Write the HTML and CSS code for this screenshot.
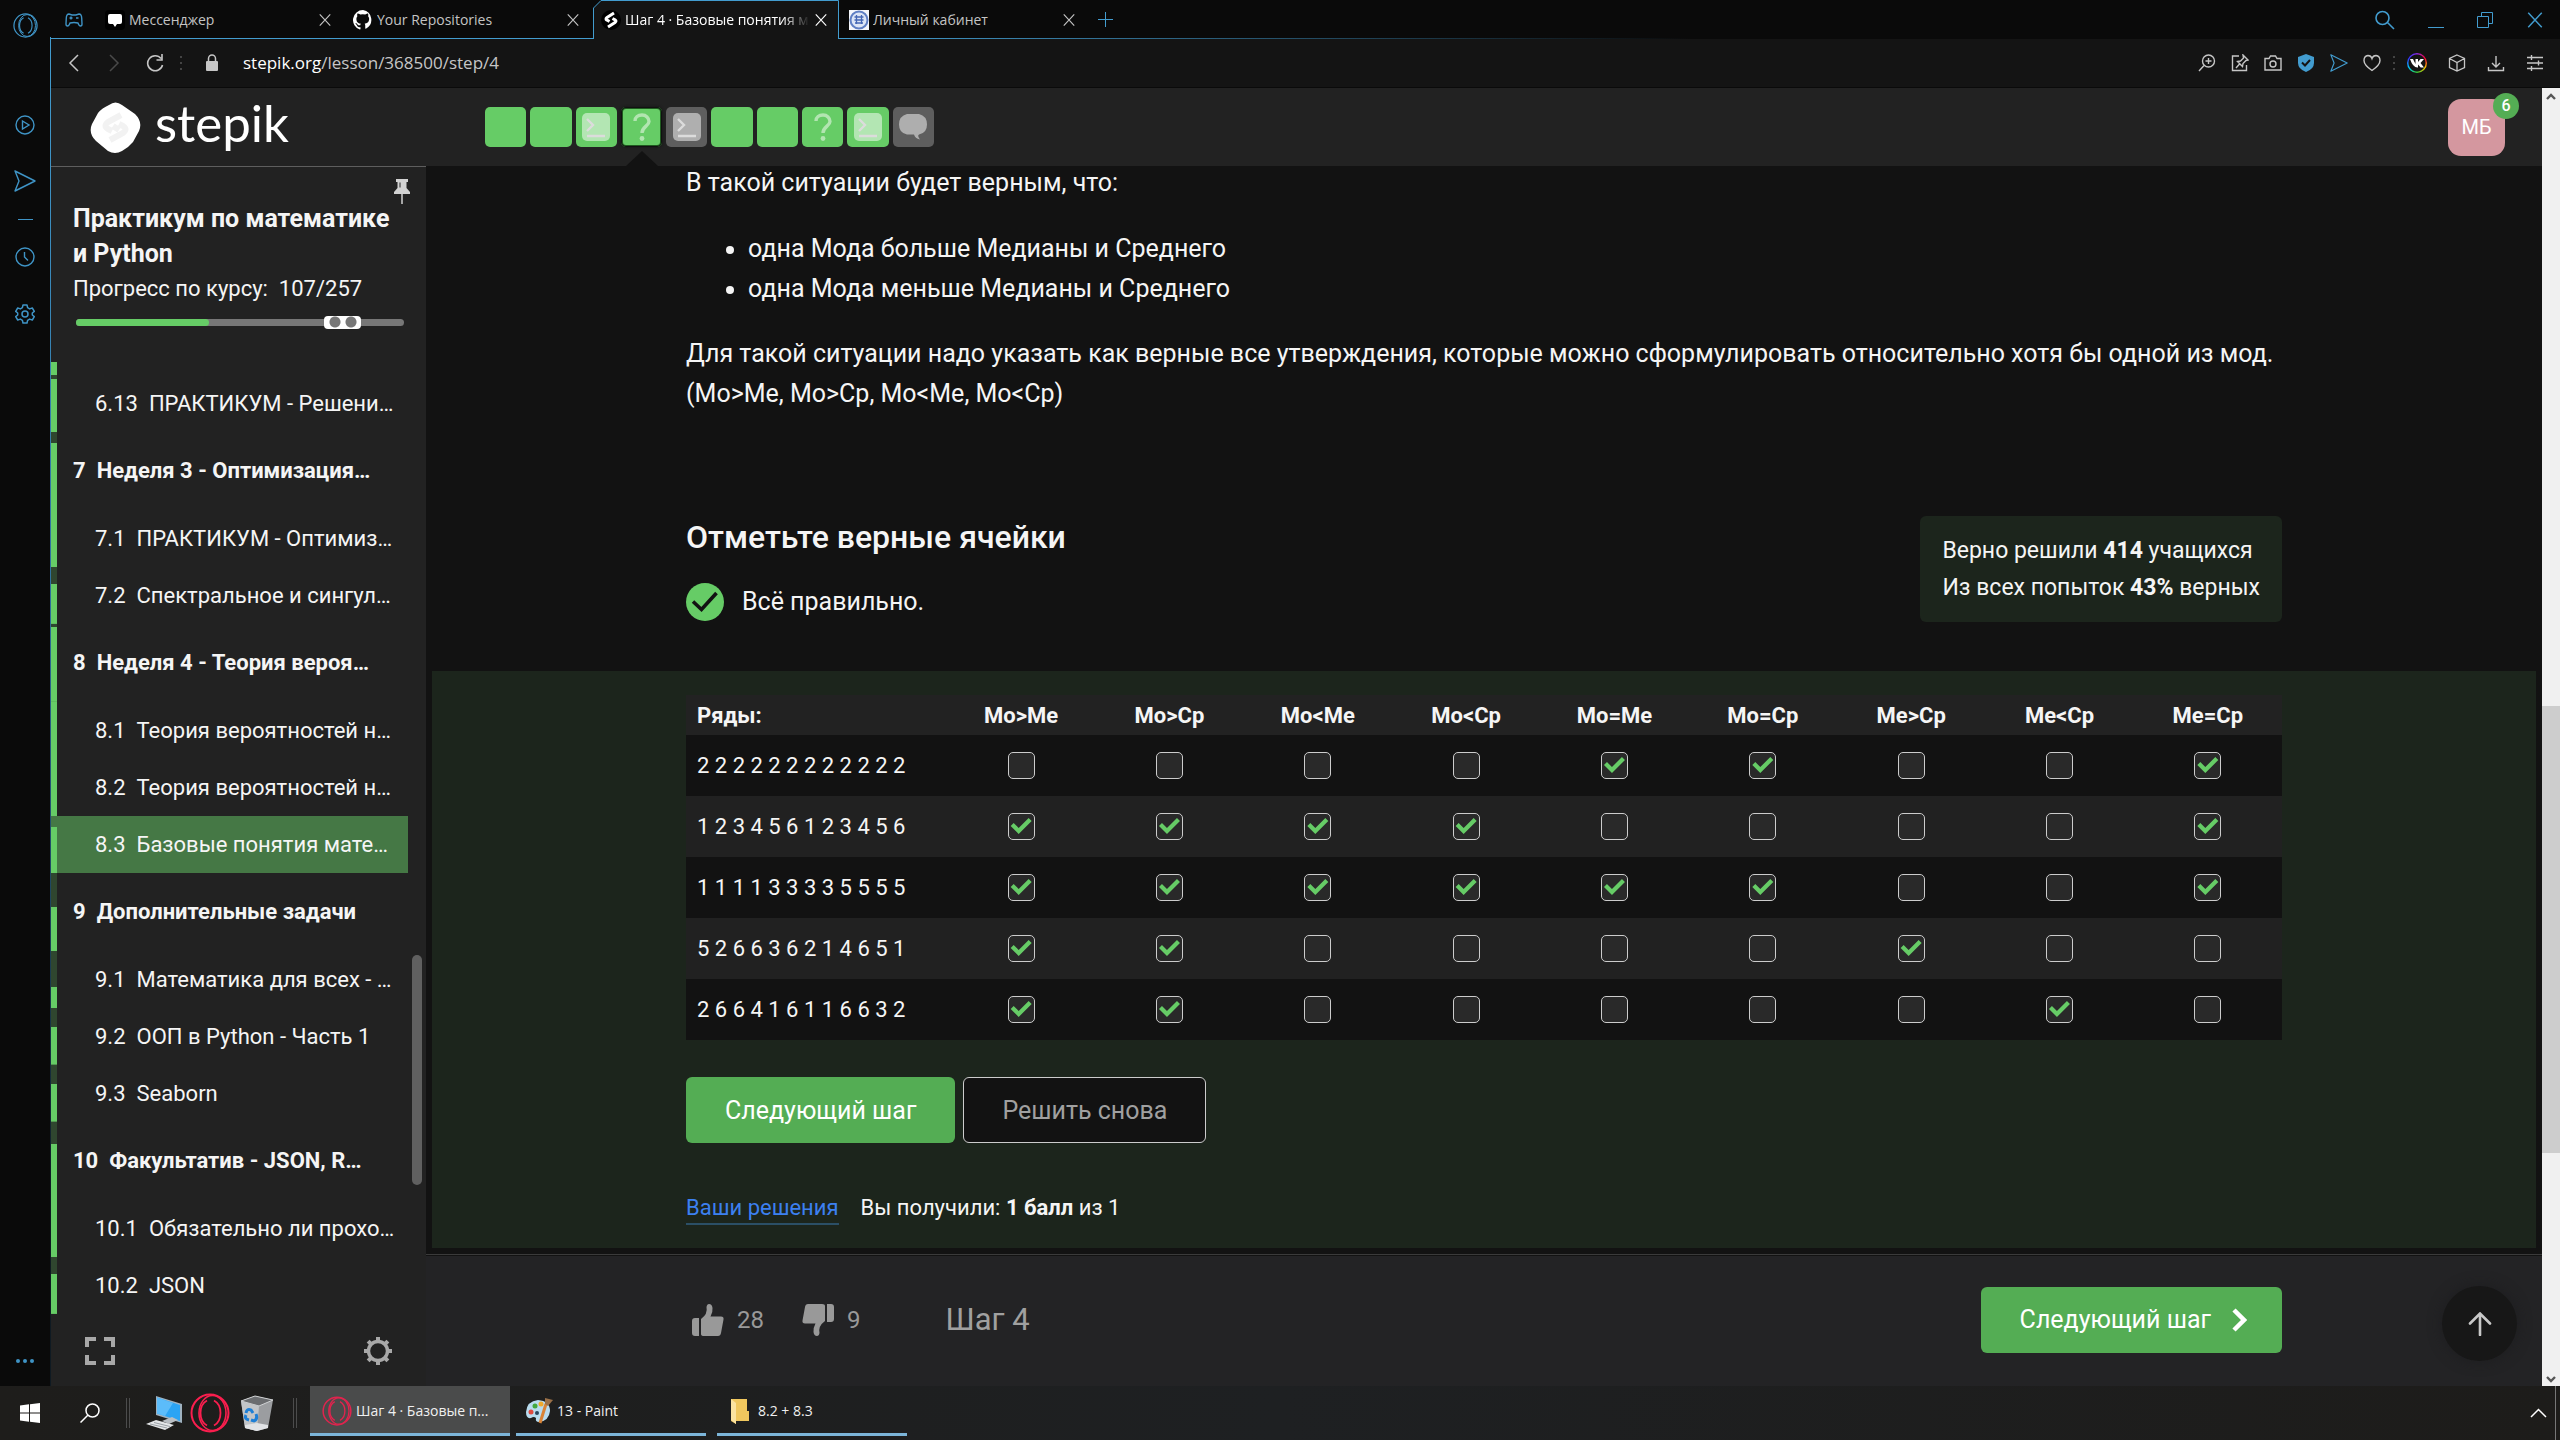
FILE: index.html
```html
<!DOCTYPE html>
<html lang="ru">
<head>
<meta charset="utf-8">
<meta name="viewport" content="width=device-width, initial-scale=1">
<title>Шаг 4 · Базовые понятия</title>
<link rel="stylesheet" href="styles.css">
</head>
<body>
<svg class="defs" aria-hidden="true">
  <symbol id="x" viewBox="0 0 16 16"><path d="M2 1.500 14 14.500M14 1.500 2 14.500" fill="none" stroke="currentColor" stroke-width="1.300"/></symbol>
  <symbol id="opera" viewBox="0 0 40 40"><g fill="none" stroke="currentColor"><circle cx="20" cy="20" r="18.500" stroke-width="2"/><ellipse cx="22.500" cy="20" rx="13.500" ry="17.500" stroke-width="1.600"/><path d="M17 7.500Q10.500 11 10.500 20T17 32.500M24 7.500Q30.500 11 30.500 20T24 32.500" stroke-width="1.800"/></g></symbol>
  <symbol id="send" viewBox="0 0 22 22"><path d="M1 1 21 11 1 21 5 11Z" fill="none" stroke="currentColor" stroke-width="1.400" stroke-linejoin="round"/></symbol>
  <symbol id="find" viewBox="0 0 20 20"><path d="M12.500 12.500 19 19M14 8A6.500 6.500 0 1 1 1 8 6.500 6.500 0 0 1 14 8Z" fill="none" stroke="currentColor" stroke-width="1.600"/></symbol>
  <symbol id="console" viewBox="0 0 28 28"><rect width="28" height="28" rx="5" fill="#fff" opacity=".5"/><path d="M5 6 11 12 5 18M5 23H23" fill="none" stroke="#dcdcdc" stroke-width="2.400"/></symbol>
  <symbol id="quiz" viewBox="0 0 18 28"><path d="M2 8C2 4 5 2 9 2s7 3 7 6.500C16 13 9 13.500 9 20" fill="none" stroke="#b2e5b1" stroke-width="3.400"/><circle cx="9" cy="25.500" r="2.400" fill="#b2e5b1"/></symbol>
  <symbol id="thumb" viewBox="0 0 32 32"><path d="M0 17q0-3 3-3h4v18H3q-3 0-3-3ZM9 15q7-5 5.500-12Q15 0 17 0q3 0 3.500 4 .5 4-2 8.500H29q3 0 2.500 3L29 29q-.5 3-3 3H12q-3 0-3-2Z" fill="currentColor"/></symbol>
</svg>

<div class="browser">
  <nav class="rail" aria-label="Боковая панель браузера">
    <button class="rail-logo" aria-label="Opera"><svg width="25" height="25"><use href="#opera"/></svg></button>
    <button class="rail-play" aria-label="Плеер"><svg width="20" height="20" viewBox="0 0 20 20" fill="none" stroke="currentColor" stroke-width="1.400"><circle cx="10" cy="10" r="9"/><path d="M7.500 6 14 10 7.500 14Z"/></svg></button>
    <button aria-label="Моя лента"><svg width="22" height="22"><use href="#send"/></svg></button>
    <span class="rail-line"></span>
    <button class="rail-clock" aria-label="История"><svg width="20" height="20" viewBox="0 0 20 20" fill="none" stroke="currentColor" stroke-width="1.400"><circle cx="10" cy="10" r="9"/><path d="M9.500 5V10L13 13.500"/></svg></button>
    <button aria-label="Настройки"><svg width="20" height="20" viewBox="0 0 20 20" fill="none" stroke="currentColor" stroke-width="1.500" stroke-linejoin="round"><circle cx="10" cy="10" r="3"/><path d="M8 1h4l.6 2.700 2 1.200L17.300 4l2 3.400L17.300 9v2l2 1.600-2 3.400-2.700-.9-2 1.200L12 19H8l-.6-2.700-2-1.200-2.700.9-2-3.400L2.700 11V9L.7 7.400l2-3.400 2.700.9 2-1.200Z"/></svg></button>
    <button class="rail-more" aria-label="Ещё"><svg width="18" height="4" viewBox="0 0 18 4" fill="currentColor"><circle cx="2" cy="2" r="2"/><circle cx="9" cy="2" r="2"/><circle cx="16" cy="2" r="2"/></svg></button>
  </nav>

  <div class="window">
    <div class="tabbar">
      <svg class="gamepad" width="18" height="14" viewBox="0 0 18 14" fill="none" stroke="currentColor" stroke-width="1.400"><path d="M4 1Q1.500 1 1.300 5L1 11q0 2 1.500 2Q4 13 5 10q4-1 8 0 1 3 2.500 3Q17 13 17 11l-.3-6Q16.500 1 14 1L11 2H7Z"/><path d="M4.500 5h3M6 3.500v3M11 5h2.500"/></svg>
      <div class="tab"><svg width="20" height="20" viewBox="0 0 20 20"><rect width="20" height="20" rx="4" fill="#000"/><path d="M5 4h10q2 0 2 2v6q0 2-2 2h-3l-2 3-2-3H5q-2 0-2-2V6q0-2 2-2Z" fill="#fff"/></svg><span>Мессенджер</span><button aria-label="Закрыть вкладку"><svg width="14" height="14"><use href="#x"/></svg></button></div>
      <div class="tab"><svg width="20" height="20" viewBox="0 0 16 16" fill="#fff"><path d="M8 0a8 8 0 0 0-2.500 15.600c.4 0 .5-.2.500-.4v-1.500c-2 .4-2.700-.9-2.900-1.500-.1-.3-.5-.9-.8-1.100-.3-.2-.7-.5 0-.5s1.100.600 1.200.8c.7 1.200 1.900.9 2.300.7.1-.5.300-.9.500-1.100-1.800-.2-3.600-.9-3.600-4 0-.9.300-1.600.8-2.100-.1-.2-.4-1 .1-2.100 0 0 .7-.2 2.200.8a7.400 7.400 0 0 1 4 0c1.500-1 2.200-.8 2.200-.8.4 1.100.2 1.900.1 2.100.5.600.8 1.300.8 2.100 0 3.100-1.900 3.700-3.600 3.900.3.300.5.700.5 1.500v2.200c0 .2.100.5.500.4A8 8 0 0 0 8 0Z"/></svg><span>Your Repositories</span><button aria-label="Закрыть вкладку"><svg width="14" height="14"><use href="#x"/></svg></button></div>
      <div class="tab tab-active"><svg class="tab-shape" viewBox="0 0 247 39" preserveAspectRatio="none"><path d="M.5 39V8L8 .500H245.500V39" fill="#141414" stroke="#429ccf"/></svg><svg width="20" height="20" viewBox="0 0 20 20"><circle cx="10" cy="10" r="10" fill="#000"/><path d="M13 3 6 7.500Q4 9 6 10.200M7 17l7-4.500q2-1.500 0-2.700L11.500 8.500M8.500 11.500 6 10" fill="none" stroke="#fff" stroke-width="3"/></svg><span>Шаг 4 · Базовые понятия м</span><button aria-label="Закрыть вкладку"><svg width="14" height="14"><use href="#x"/></svg></button></div>
      <div class="tab"><svg width="20" height="20" viewBox="0 0 20 20"><rect width="20" height="20" fill="#f4f6fb"/><circle cx="10" cy="10" r="8.500" fill="#dce5f6" stroke="#5f7fc4" stroke-width="2"/><path d="M5.500 7h9M5.500 10h9M6 13h8M7.500 5v9M12.500 5v9" stroke="#4567b5" stroke-width="1.300"/></svg><span>Личный кабинет</span><button aria-label="Закрыть вкладку"><svg width="14" height="14"><use href="#x"/></svg></button></div>
      <button class="new-tab" aria-label="Новая вкладка"><svg width="15" height="15" viewBox="0 0 15 15" stroke="currentColor"><path d="M0 7.500H15M7.500 0V15"/></svg></button>
      <div class="win-controls">
        <button aria-label="Поиск"><svg width="20" height="20"><use href="#find"/></svg></button>
        <button aria-label="Свернуть"><svg width="16" height="16" viewBox="0 0 16 16" stroke="currentColor"><path d="M0 15.500H16"/></svg></button>
        <button aria-label="Развернуть"><svg width="16" height="16" viewBox="0 0 16 16" fill="none" stroke="currentColor"><path d="M.5 4.500h11v11H.5ZM4.500 4.500v-4h11v11h-4"/></svg></button>
        <button aria-label="Закрыть"><svg width="18" height="18"><use href="#x"/></svg></button>
      </div>
    </div>

    <div class="addressbar">
      <button aria-label="Назад"><svg width="16" height="18" viewBox="0 0 16 18" fill="none" stroke="currentColor" stroke-width="1.500"><path d="M12 1 4 9 12 17"/></svg></button>
      <button class="dim" aria-label="Вперёд"><svg width="16" height="18" viewBox="0 0 16 18" fill="none" stroke="currentColor" stroke-width="1.500"><path d="M4 1 12 9 4 17"/></svg></button>
      <button class="reload" aria-label="Обновить"><svg width="18" height="18" viewBox="0 0 18 18" fill="none" stroke="currentColor" stroke-width="1.600"><path d="M15 4.500A7.500 7.500 0 1 0 16.500 11M16 0V6H10.500"/></svg></button>
      <span class="dots"></span>
      <svg class="lock" width="14" height="18" viewBox="0 0 14 18"><rect x="1" y="7" width="12" height="10" rx="1" fill="#c6c6c6"/><path d="M3.500 8V4.500a3.500 3.500 0 0 1 7 0V8" fill="none" stroke="#c6c6c6" stroke-width="1.500"/></svg>
      <p class="url"><b>stepik.org</b>/lesson/368500/step/4</p>
      <div class="tools">
        <button aria-label="Масштаб"><svg width="18" height="18" viewBox="0 0 18 18" fill="none" stroke="currentColor" stroke-width="1.400"><circle cx="10.500" cy="7" r="6"/><path d="M6 11.500 1 17M7.500 7h6M10.500 4v6"/></svg></button>
        <button aria-label="Закрепить"><svg width="18" height="18" viewBox="0 0 18 18" fill="none" stroke="currentColor" stroke-width="1.400"><path d="M8 2H1.500v14.500h14V11M12 1l5 5-2 .5-3 3-.5 3-5-5 3-.5 3-3ZM9 9.500 5 14"/></svg></button>
        <button aria-label="Снимок"><svg width="18" height="18" viewBox="0 0 18 18" fill="none" stroke="currentColor" stroke-width="1.400"><path d="M1 4.500h4l1.500-2.500h5L13 4.500h4V16H1Z"/><circle cx="9" cy="10" r="3"/></svg></button>
        <button class="accent" aria-label="Блокировка"><svg width="18" height="18" viewBox="0 0 18 18"><path d="M9 0 17 3V9q0 6-8 9-8-3-8-9V3Z" fill="currentColor"/><path d="M5 8.500 8 11.500 13 6" fill="none" stroke="#141414" stroke-width="2"/></svg></button>
        <button class="accent" aria-label="Отправить"><svg width="18" height="18"><use href="#send"/></svg></button>
        <button aria-label="Закладки"><svg width="18" height="18" viewBox="0 0 18 18" fill="none" stroke="currentColor" stroke-width="1.400"><path d="M9 16.500Q1 11 1 6.500 1 2 5 1.500 8 1.500 9 4.500 10 1.500 13 1.500 17 2 17 6.500 17 11 9 16.500Z"/></svg></button>
        <span class="dots"></span>
        <button class="vk" aria-label="VK"><svg width="16" height="12" viewBox="0 0 16 12"><path d="M1 2h3l2.500 5V2H9v3l2.500-3H15l-3.500 4 3.500 4.500h-3.300L9 7.500v3Q4 11 1 2Z" fill="#fff"/></svg></button>
        <button class="gap-l" aria-label="Расширения"><svg width="18" height="18" viewBox="0 0 18 18" fill="none" stroke="currentColor" stroke-width="1.300"><path d="M9 1 16.500 4.500v9L9 17 1.500 13.500v-9ZM1.500 4.500 9 8.500l7.500-4M9 8.500V17"/></svg></button>
        <button class="gap-l" aria-label="Загрузки"><svg width="18" height="18" viewBox="0 0 18 18" fill="none" stroke="currentColor" stroke-width="1.400"><path d="M9 2v11M5 9l4 4 4-4M1.500 13v3.500h15V13"/></svg></button>
        <button class="gap-l" aria-label="Простая настройка"><svg width="18" height="18" viewBox="0 0 18 18" fill="none" stroke="currentColor" stroke-width="1.400"><path d="M1 3.500h16M1 9h16M1 14.500h16M5.500 1v5M12.500 6.500v5M5.500 12v5"/></svg></button>
      </div>
    </div>

    <div class="viewport">
      <div class="page">
        <header class="topbar">
          <a class="logo" href="#"><svg width="51" height="51" viewBox="0 0 51 51"><path d="M19 3Q25.500-2 32 3L45 12Q53 20 49 29L43 40Q38 46 32 49 25 53 18 49L6 39Q-2 31 2 22L8 11Q12 6 19 3Z" fill="#fff"/><path d="M31 13 18 20q-5 4 0 7l4 2M20 38l13-7q5-4 0-7l-4-2M23 24l6 4" fill="none" stroke="#f2f2f2" stroke-width="6"/></svg><span>stepik</span></a>
          <nav class="steps" aria-label="Шаги урока">
            <a href="#" aria-label="Шаг 1"></a>
            <a href="#" aria-label="Шаг 2"></a>
            <a href="#" aria-label="Шаг 3"><svg width="28" height="28"><use href="#console"/></svg></a>
            <a href="#" class="current" aria-label="Шаг 4"><svg width="18" height="28"><use href="#quiz"/></svg></a>
            <a href="#" class="todo" aria-label="Шаг 5"><svg width="28" height="28"><use href="#console"/></svg></a>
            <a href="#" aria-label="Шаг 6"></a>
            <a href="#" aria-label="Шаг 7"></a>
            <a href="#" aria-label="Шаг 8"><svg width="18" height="28"><use href="#quiz"/></svg></a>
            <a href="#" aria-label="Шаг 9"><svg width="28" height="28"><use href="#console"/></svg></a>
            <a href="#" class="todo" aria-label="Шаг 10"><svg width="30" height="26" viewBox="0 0 30 26"><path d="M9 0H21Q29 2 29 10.500T21 20.500q-2 1 1 5-5-1-6-5H9Q1 19 1 10.500T9 0Z" fill="#aeaeae"/></svg></a>
          </nav>
          <button class="avatar">МБ<span>6</span></button>
        </header>

        <div class="columns">
          <aside class="sidebar">
            <div class="course">
              <button class="pin" aria-label="Закрепить меню"><svg width="16" height="25" viewBox="0 0 16 25"><path d="M2 0H14V3H12.500V9L16 13V15H0V13L3.500 9V3H2Z" fill="#d2d2d2"/><path d="M6 3.500v5" stroke="#222"/><path d="M8 15V25" stroke="#d2d2d2" stroke-width="1.500"/></svg></button>
              <h1>Практикум по математике и Python</h1>
              <p>Прогресс по курсу:&nbsp; 107/257</p>
              <div class="progress"><i></i><span></span></div>
            </div>
            <nav class="toc" aria-label="Содержание курса">
              <div class="toc-cut"></div>
              <a href="#" style="--done:93%"><b>6.13</b>ПРАКТИКУМ - Решени…</a>
              <h2 style="--done:86%"><b>7</b>Неделя 3 - Оптимизация…</h2>
              <a href="#"><b>7.1</b>ПРАКТИКУМ - Оптимиз…</a>
              <a href="#" style="--done:70%"><b>7.2</b>Спектральное и сингул…</a>
              <h2 style="--done:96%"><b>8</b>Неделя 4 - Теория вероя…</h2>
              <a href="#"><b>8.1</b>Теория вероятностей н…</a>
              <a href="#"><b>8.2</b>Теория вероятностей н…</a>
              <a href="#" class="active" style="--done:81%"><b>8.3</b>Базовые понятия мате…</a>
              <h2 style="--done:57%"><b>9</b>Дополнительные задачи</h2>
              <a href="#" style="--done:37%"><b>9.1</b>Математика для всех - …</a>
              <a href="#" style="--done:66%"><b>9.2</b>ООП в Python - Часть 1</a>
              <a href="#" style="--done:66%"><b>9.3</b>Seaborn</a>
              <h2 style="--done:72%"><b>10</b>Факультатив - JSON, R…</h2>
              <a href="#"><b>10.1</b>Обязательно ли прохо…</a>
              <a href="#" style="--done:70%"><b>10.2</b>JSON</a>
              <span class="toc-thumb"></span>
            </nav>
            <div class="side-foot">
              <button aria-label="На весь экран"><svg width="30" height="28" viewBox="0 0 30 28" fill="none" stroke="currentColor" stroke-width="4"><path d="M2 10V2h9M19 2h9v8M28 18v8h-9M11 26H2v-8"/></svg></button>
              <button aria-label="Настройки"><svg width="28" height="28" viewBox="0 0 28 28" fill="none" stroke="currentColor"><circle cx="14" cy="14" r="9.500" stroke-width="3.400"/><path d="M14 0v4M14 24v4M0 14h4M24 14h4M4.100 4.100 7 7M21 21l2.900 2.900M4.100 23.900 7 21M21 7l2.900-2.900" stroke-width="4"/></svg></button>
            </div>
          </aside>

          <main class="main">
            <div class="content lesson">
              <p>В такой ситуации будет верным, что:</p>
              <ul><li>одна Мода больше Медианы и Среднего</li><li>одна Мода меньше Медианы и Среднего</li></ul>
              <p>Для такой ситуации надо указать как верные все утверждения, которые можно сформулировать относительно хотя бы одной из мод.<br>(Mo&gt;Me, Mo&gt;Ср, Mo&lt;Me, Mo&lt;Ср)</p>
            </div>
            <div class="content task-head">
              <div>
                <h2>Отметьте верные ячейки</h2>
                <p class="verdict"><svg width="38" height="38" viewBox="0 0 38 38"><circle cx="19" cy="19" r="19" fill="#66cc66"/><path d="M7 18.500 15.500 26.500 30.500 10" fill="none" stroke="#121212" stroke-width="3.600"/></svg>Всё правильно.</p>
              </div>
              <div class="stats"><p>Верно решили <b>414</b> учащихся</p><p>Из всех попыток <b>43%</b> верных</p></div>
            </div>

            <section class="attempt">
              <div class="content">
                <table>
                  <thead><tr><th scope="col">Ряды:</th><th scope="col" id="c1">Mo&gt;Me</th><th scope="col" id="c2">Mo&gt;Ср</th><th scope="col" id="c3">Mo&lt;Me</th><th scope="col" id="c4">Mo&lt;Ср</th><th scope="col" id="c5">Mo=Me</th><th scope="col" id="c6">Mo=Ср</th><th scope="col" id="c7">Me&gt;Ср</th><th scope="col" id="c8">Me&lt;Ср</th><th scope="col" id="c9">Me=Ср</th></tr></thead>
                  <tbody>
                    <tr><td id="r1">2 2 2 2 2 2 2 2 2 2 2 2</td>
                      <td><input type="checkbox" aria-labelledby="r1 c1"></td><td><input type="checkbox" aria-labelledby="r1 c2"></td><td><input type="checkbox" aria-labelledby="r1 c3"></td><td><input type="checkbox" aria-labelledby="r1 c4"></td><td><input type="checkbox" aria-labelledby="r1 c5" checked></td><td><input type="checkbox" aria-labelledby="r1 c6" checked></td><td><input type="checkbox" aria-labelledby="r1 c7"></td><td><input type="checkbox" aria-labelledby="r1 c8"></td><td><input type="checkbox" aria-labelledby="r1 c9" checked></td></tr>
                    <tr><td id="r2">1 2 3 4 5 6 1 2 3 4 5 6</td>
                      <td><input type="checkbox" aria-labelledby="r2 c1" checked></td><td><input type="checkbox" aria-labelledby="r2 c2" checked></td><td><input type="checkbox" aria-labelledby="r2 c3" checked></td><td><input type="checkbox" aria-labelledby="r2 c4" checked></td><td><input type="checkbox" aria-labelledby="r2 c5"></td><td><input type="checkbox" aria-labelledby="r2 c6"></td><td><input type="checkbox" aria-labelledby="r2 c7"></td><td><input type="checkbox" aria-labelledby="r2 c8"></td><td><input type="checkbox" aria-labelledby="r2 c9" checked></td></tr>
                    <tr><td id="r3">1 1 1 1 3 3 3 3 5 5 5 5</td>
                      <td><input type="checkbox" aria-labelledby="r3 c1" checked></td><td><input type="checkbox" aria-labelledby="r3 c2" checked></td><td><input type="checkbox" aria-labelledby="r3 c3" checked></td><td><input type="checkbox" aria-labelledby="r3 c4" checked></td><td><input type="checkbox" aria-labelledby="r3 c5" checked></td><td><input type="checkbox" aria-labelledby="r3 c6" checked></td><td><input type="checkbox" aria-labelledby="r3 c7"></td><td><input type="checkbox" aria-labelledby="r3 c8"></td><td><input type="checkbox" aria-labelledby="r3 c9" checked></td></tr>
                    <tr><td id="r4">5 2 6 6 3 6 2 1 4 6 5 1</td>
                      <td><input type="checkbox" aria-labelledby="r4 c1" checked></td><td><input type="checkbox" aria-labelledby="r4 c2" checked></td><td><input type="checkbox" aria-labelledby="r4 c3"></td><td><input type="checkbox" aria-labelledby="r4 c4"></td><td><input type="checkbox" aria-labelledby="r4 c5"></td><td><input type="checkbox" aria-labelledby="r4 c6"></td><td><input type="checkbox" aria-labelledby="r4 c7" checked></td><td><input type="checkbox" aria-labelledby="r4 c8"></td><td><input type="checkbox" aria-labelledby="r4 c9"></td></tr>
                    <tr><td id="r5">2 6 6 4 1 6 1 1 6 6 3 2</td>
                      <td><input type="checkbox" aria-labelledby="r5 c1" checked></td><td><input type="checkbox" aria-labelledby="r5 c2" checked></td><td><input type="checkbox" aria-labelledby="r5 c3"></td><td><input type="checkbox" aria-labelledby="r5 c4"></td><td><input type="checkbox" aria-labelledby="r5 c5"></td><td><input type="checkbox" aria-labelledby="r5 c6"></td><td><input type="checkbox" aria-labelledby="r5 c7"></td><td><input type="checkbox" aria-labelledby="r5 c8" checked></td><td><input type="checkbox" aria-labelledby="r5 c9"></td></tr>
                  </tbody>
                </table>
                <div class="actions"><button class="btn">Следующий шаг</button><button class="btn btn-ghost">Решить снова</button></div>
                <p class="score"><a href="#">Ваши решения</a><span>Вы получили: <b>1 балл</b> из 1</span></p>
              </div>
            </section>

            <footer class="step-foot">
              <div class="content">
                <button class="vote"><svg width="32" height="32"><use href="#thumb"/></svg>28</button>
                <button class="vote vote-down"><svg width="32" height="32"><use href="#thumb"/></svg>9</button>
                <span class="step-name">Шаг 4</span>
                <button class="btn btn-next">Следующий шаг<svg width="15" height="24" viewBox="0 0 15 24"><path d="M2 2 12 12 2 22" fill="none" stroke="#fff" stroke-width="4.500"/></svg></button>
              </div>
              <button class="to-top" aria-label="Наверх"><svg width="24" height="24" viewBox="0 0 24 24" fill="none" stroke="#c8c8c8" stroke-width="2.600" stroke-linecap="round"><path d="M12 23V2M2 11.500 12 1.500 22 11.500"/></svg></button>
            </footer>
          </main>
        </div>
      </div>

      <div class="scrollbar" aria-hidden="true">
        <svg width="10" height="8" viewBox="0 0 10 8"><path d="M1 6 5 2 9 6" fill="none" stroke="#555" stroke-width="2.400"/></svg>
        <span></span>
        <svg width="10" height="8" viewBox="0 0 10 8"><path d="M1 2 5 6 9 2" fill="none" stroke="#555" stroke-width="2.400"/></svg>
      </div>
    </div>
  </div>
</div>

<footer class="taskbar">
  <button class="start" aria-label="Пуск"><svg width="20" height="20" viewBox="0 0 20 20" fill="#fff"><path d="M0 2.500 9 1.300V9.500H0ZM10 1.200 20 0V9.500H10ZM0 10.500H9V18.700L0 17.500ZM10 10.500H20V20L10 18.800Z"/></svg></button>
  <button class="search" aria-label="Поиск"><svg width="20" height="20" viewBox="0 0 20 20" fill="none" stroke="#fff" stroke-width="1.500"><circle cx="12.500" cy="7.500" r="6.500"/><path d="M8 12 .500 19.500"/></svg></button>
  <span class="grip"></span>
  <button class="pc" aria-label="Компьютер"><svg width="38" height="36" viewBox="0 0 38 36"><path d="M11 1 37 9V28L11 20Z" fill="#9fb2c0"/><path d="M12 2.500 35 10V26L12 18.500Z" fill="#2ba4f4"/><path d="M12 2.500 28 8 20 21 12 18.500Z" fill="#5cbcfa"/><path d="M17 26 27 22 33 25 24 29Z" fill="#b9bec3"/><path d="M1 29 11 25 29 30 20 35Z" fill="#e4e6e8"/><path d="M5 29 22 33M9 27.500 25 31.500" stroke="#9aa0a5"/></svg></button>
  <button class="opera" aria-label="Opera"><svg width="40" height="40"><use href="#opera"/></svg></button>
  <button class="bin" aria-label="Корзина"><svg width="34" height="37" viewBox="0 0 34 37"><path d="M1 6 15 1 33 5 28 33 17 36 5 33Z" fill="#9b9da0"/><path d="M1 6 15 1 33 5 19 11Z" fill="#6b6d70" stroke="#cfd1d3"/><path d="M1 6 19 11 17 36 5 33Z" fill="#c2c5c8"/><path d="M5 30 17 28 28 30 28 33 17 36 5 33Z" fill="#e1e3e6"/><path d="M6 18Q7 13 11 15l2 3M16 19q2 5-2 7l-3-1M9 25q-5-1-3-5" fill="none" stroke="#1e7fd6" stroke-width="3"/></svg></button>
  <span class="grip grip-2"></span>
  <button class="task task-active"><svg width="30" height="30"><use href="#opera"/></svg><span>Шаг 4 · Базовые п...</span></button>
  <button class="task"><svg width="28" height="28" viewBox="0 0 28 28"><path d="M13 3Q25 4 25 14 24 24 14 25q-4 0-3-4-2-2-5 0-5 1-5-6Q2 4 13 3Z" fill="#b9dcef"/><circle cx="6" cy="15" r="2.500" fill="#e04a3f"/><circle cx="10" cy="9" r="2.500" fill="#43a83d"/><circle cx="16" cy="7" r="2.500" fill="#f0a92c"/><circle cx="12" cy="16" r="2" fill="#29465e"/><path d="M21 7 15 26" stroke="#d98336" stroke-width="3"/><path d="M20 1 28 3 23 9 20 7Z" fill="#9a7048"/></svg><span>13 - Paint</span></button>
  <button class="task"><svg width="28" height="28" viewBox="0 0 28 28"><path d="M5 2H21V14H23V24H10V27L5 24Z" fill="#f0c75e"/><path d="M5 2 10 6V27L5 23Z" fill="#fbe3a0"/></svg><span>8.2 + 8.3</span></button>
  <button class="tray" aria-label="Скрытые значки"><svg width="17" height="10" viewBox="0 0 17 10"><path d="M1 9 8.500 1.500 16 9" fill="none" stroke="#fff" stroke-width="1.500"/></svg></button>
</footer>
</body>
</html>
```
FILE: styles.css
```css
* { box-sizing: border-box; margin: 0; padding: 0; }
html, body { height: 100%; }
body {
  display: flex;
  flex-direction: column;
  background: #0a0a0a;
  color: #f5f5f5;
  font: 22px/36px Roboto, sans-serif;
}
button { border: 0; background: none; color: inherit; font: inherit; }
svg { display: block; flex: none; }
a { color: inherit; text-decoration: none; }
.defs { position: absolute; width: 0; height: 0; }

.browser { flex: 1; display: flex; min-height: 0; }

/* Opera side rail */
.rail {
  width: 51px;
  flex: none;
  display: flex;
  flex-direction: column;
  align-items: center;
  padding: 13px 0 23px;
  color: #3f94c6;
  border-right: 1px solid;
  border-image: linear-gradient(#0a0a0a 38px, #429ccf 38px, #2e6f9c 600px, #0f1a22 1200px) 1;
}
.rail-play { margin: 77px 0 35px; }
.rail-line { width: 15px; height: 1px; margin: 27px 0; background: currentColor; }
.rail-clock { margin-bottom: 37px; }
.rail-more { margin-top: auto; }

.window { flex: 1; min-width: 0; display: flex; flex-direction: column; }

/* Tabs */
.tabbar {
  display: flex;
  align-items: center;
  height: 39px;
  flex: none;
  padding-left: 14px;
  color: #c4c4c4;
  font: 14px/20px "Open Sans", sans-serif;
  background: linear-gradient(90deg, #429ccf 800px, #0a0a0a 1640px) 0 100% / 100% 1px no-repeat;
}
.gamepad { margin-right: 14px; color: #3f94c6; }
.tab {
  position: relative;
  width: 248px;
  height: 39px;
  display: flex;
  align-items: center;
  gap: 4px;
  padding: 0 13px 0 8px;
}
.tab > * { position: relative; }
.tab span { flex: 1; overflow: hidden; white-space: nowrap; }
.tab-active { color: #fff; }
.tab-active span { mask-image: linear-gradient(90deg, #000 85%, transparent); }
.tab .tab-shape { position: absolute; left: 0; top: 0; width: 247px; height: 39px; }
.new-tab { margin-left: 9px; color: #429ccf; }
.win-controls { display: flex; gap: 33px; margin-left: auto; padding-right: 16px; color: #429ccf; }

/* Address bar */
.addressbar {
  display: flex;
  align-items: center;
  height: 49px;
  flex: none;
  padding: 0 16px 0 15px;
  background: #141414;
  border-bottom: 1px solid #0a0a0a;
  color: #c6c6c6;
}
.addressbar > button { margin-right: 24px; }
.addressbar .reload { margin-right: 16px; }
.addressbar .dim { color: #4a4a4a; }
.dots { width: 2px; height: 14px; background: repeating-linear-gradient(#444 0 2px, transparent 2px 6px); }
.lock { margin: 0 24px 0 23px; }
.url { font: 17px/24px "Open Sans", sans-serif; }
.url b { color: #fff; font-weight: 400; }
.tools { display: flex; align-items: center; gap: 15px; margin-left: auto; }
.tools .dots { margin: 0 -3px; }
.accent { color: #429ccf; }
.vk {
  display: grid;
  place-items: center;
  width: 20px;
  height: 20px;
  border-radius: 50%;
  background: radial-gradient(circle, #141414 8px, transparent 9px), conic-gradient(#8a2be2, #f03, #fc0, #3c3, #0cf, #33f, #8a2be2);
}
.tools .gap-l { margin-left: 6px; }

.viewport { flex: 1; display: flex; min-height: 0; }
.page { flex: 1; min-width: 0; display: flex; flex-direction: column; background: #121212; }

/* Stepik header */
.topbar {
  position: relative;
  display: flex;
  align-items: center;
  height: 78px;
  flex: none;
  padding: 0 37px 0 39px;
  background: #222;
}
.logo { display: flex; align-items: center; gap: 14px; width: 395px; }
.logo span { font: 51px/60px Lato, sans-serif; color: #fff; padding-bottom: 9px; }
.steps { display: grid; grid-template-columns: repeat(10, 1fr); gap: 4px; width: 449px; }
.steps a {
  position: relative;
  height: 40px;
  display: grid;
  place-items: center;
  border-radius: 5px;
  background: #66cc66;
}
.steps .todo { background: #5e5e5e; }
.steps .current { box-shadow: inset 0 0 0 1px #111, inset 0 0 0 2px #1f5a1f, 0 0 3px #111; }
.current::after {
  content: "";
  position: absolute;
  left: 50%;
  top: 44px;
  margin-left: -16px;
  border: 16px solid transparent;
  border-top: 0;
  border-bottom: 15px solid #121212;
}
.avatar {
  position: relative;
  width: 57px;
  height: 57px;
  margin-left: auto;
  border-radius: 13px;
  background: #d4979f;
  color: #fff;
  font-size: 20px;
}
.avatar span {
  position: absolute;
  right: -14px;
  top: -6px;
  width: 26px;
  height: 26px;
  border-radius: 50%;
  background: #54ad54;
  font: 500 16px/26px Roboto, sans-serif;
}

.columns { flex: 1; display: flex; min-height: 0; }

/* Course sidebar */
.sidebar {
  width: 375px;
  flex: none;
  display: flex;
  flex-direction: column;
  background: #222;
  border-top: 1px solid #5e5e5e;
}
.course { position: relative; height: 195px; flex: none; padding: 34px 22px 0; }
.course h1 { font: 700 25px/35px Roboto, sans-serif; }
.pin { position: absolute; right: 16px; top: 12px; }
.progress { position: relative; height: 7px; margin: 12px 0 0 3px; border-radius: 4px; background: #777; }
.progress i { display: block; width: 133px; height: 7px; border-radius: 4px; background: #66cc66; }
.progress span {
  position: absolute;
  right: 43px;
  top: -3px;
  width: 37px;
  height: 13px;
  border-radius: 4px;
  background: radial-gradient(circle at 11px 6px, #777 5px, transparent 6px), radial-gradient(circle at 27px 6px, #777 5px, transparent 6px), #fff;
}
.toc { position: relative; flex: 1; min-height: 0; overflow: hidden; }
.toc a, .toc h2, .toc-cut {
  display: block;
  width: 357px;
  height: 57px;
  padding-left: 44px;
  font: 22px/57px Roboto, sans-serif;
  white-space: nowrap;
  background: linear-gradient(#66cc66, #66cc66) 0 100% / 6px var(--done, 100%) no-repeat, linear-gradient(#2f462f, #2f462f) 0 0 / 6px 100% no-repeat;
}
.toc h2 { height: 78px; padding-left: 22px; font-weight: 700; line-height: 78px; }
.toc .toc-cut { height: 13px; border-bottom: 0; }
.toc b { margin-right: 11px; font-weight: inherit; }
.toc .active { background: linear-gradient(#66cc66, #66cc66) 0 100% / 6px var(--done) no-repeat, #457845; }
.toc-thumb { position: absolute; right: 4px; top: 62%; width: 10px; height: 24%; border-radius: 5px; background: #606060; }
.side-foot {
  height: 67px;
  flex: none;
  display: flex;
  justify-content: space-between;
  align-items: center;
  padding: 0 34px 3px;
  color: #a8a8a8;
}

/* Lesson */
.main { flex: 1; min-width: 0; display: flex; flex-direction: column; }
.content { width: 100%; max-width: 1596px; margin: 0 auto; }
.lesson { margin-top: -3px; font-size: 25px; line-height: 40px; }
.lesson ul { margin: 26px 0 25px; padding-left: 62px; }
.task-head { display: flex; justify-content: space-between; align-items: flex-start; margin-top: 102px; }
.task-head h2 { font: 500 32px/42px Roboto, sans-serif; }
.verdict { display: flex; align-items: center; gap: 18px; margin-top: 25px; font-size: 25px; line-height: 38px; }
.stats { padding: 16px 22px; border-radius: 6px; background: #1c251c; font-size: 23px; line-height: 37px; }

.attempt { margin: 49px 6px 6px; padding: 24px 0 23px; background: #1c251c; }
table { width: 100%; table-layout: fixed; border-collapse: collapse; }
th { height: 40px; padding-top: 2px; background: #222; font-weight: 700; line-height: 38px; }
td { height: 61px; text-align: center; background: #121212; }
tr:nth-child(even) td { background: #212121; }
th:first-child, td:first-child { width: 261px; padding-left: 11px; text-align: left; }
input[type="checkbox"] {
  appearance: none;
  display: block;
  width: 27px;
  height: 27px;
  margin: 0 auto;
  border: 1px solid #ccc;
  border-radius: 5px;
  background: #292929;
}
input:checked::before {
  content: "";
  display: block;
  width: 25px;
  height: 25px;
  background: #66cc66;
  clip-path: polygon(2px 12px, 5px 9px, 10px 14px, 20px 4px, 23px 7px, 10px 20px);
}
.actions { display: flex; gap: 8px; margin-top: 37px; }
.btn {
  height: 66px;
  padding: 2px 39px 0;
  border-radius: 6px;
  background: #54ad54;
  color: #fff;
  font: 25px/36px Roboto, sans-serif;
}
.btn-ghost { padding: 2px 38px 0; border: 1px solid #ccc; background: #121212; color: #a0a0a0; }
.score { display: flex; gap: 22px; margin-top: 47px; }
.score a { color: #3c80f0; line-height: 32px; height: 35px; padding-top: 2px; border-bottom: 2px solid #2b4f66; }
.attempt .score { height: 35px; }

.step-foot {
  position: relative;
  flex: 1;
  display: flex;
  align-items: center;
  padding-bottom: 2px;
  border-top: 1px solid #3a3a3a;
  background: #232325;
  box-shadow: inset 0 1px #121212;
}
.step-foot .content { display: flex; align-items: center; color: #a0a0a0; }
.vote { display: flex; align-items: center; gap: 13px; margin: 0 38px 0 6px; font-size: 24px; color: #999; }
.vote + .vote { margin: 0 85px 0 0; }
.vote-down svg { transform: rotate(180deg); }
.step-name { font-size: 31px; }
.btn-next { display: flex; align-items: center; gap: 21px; margin-left: auto; padding: 0 35px 0 39px; }
.to-top {
  position: absolute;
  right: 25px;
  top: 31px;
  width: 75px;
  height: 75px;
  display: grid;
  place-items: center;
  border-radius: 50%;
  background: #171717;
  box-shadow: 0 0 14px #1d1d1f;
}

.scrollbar {
  width: 18px;
  flex: none;
  display: flex;
  flex-direction: column;
  align-items: center;
  justify-content: space-between;
  padding: 5px 0 3px;
  background: #f0f0f0;
}
.scrollbar span { width: 100%; height: 447px; margin-top: 383px; background: #cdcdcd; }

/* Windows taskbar */
.taskbar {
  display: flex;
  align-items: center;
  height: 54px;
  flex: none;
  padding-left: 20px;
  background: linear-gradient(90deg, #1e1d1b, #1e2022 50%, #1d1c1a);
  color: #f0f0f0;
  font: 14px/20px "Open Sans", sans-serif;
}
.search { margin: 0 26px 0 40px; }
.grip { width: 4px; height: 30px; border: 1px solid #4c4c4c; border-width: 0 1px; }
.pc { margin: 0 7px 0 15px; }
.opera { color: #fa1e4e; }
.bin { margin: 0 19px 0 10px; }
.grip-2 { margin-right: 13px; }
.task {
  display: flex;
  align-items: center;
  gap: 4px;
  width: 190px;
  height: 50px;
  margin: 0 11px 4px 0;
  padding: 2px 9px 0;
  border-bottom: 3px solid #7cb5d9;
}
.task-active { width: 200px; margin-right: 6px; padding-left: 12px; background: #4a4b4b; }
.task-active svg { color: #e0244e; }
.tray { margin-left: auto; padding-right: 8px; margin-right: 4px; border-right: 1px solid #777; height: 54px; }
```
